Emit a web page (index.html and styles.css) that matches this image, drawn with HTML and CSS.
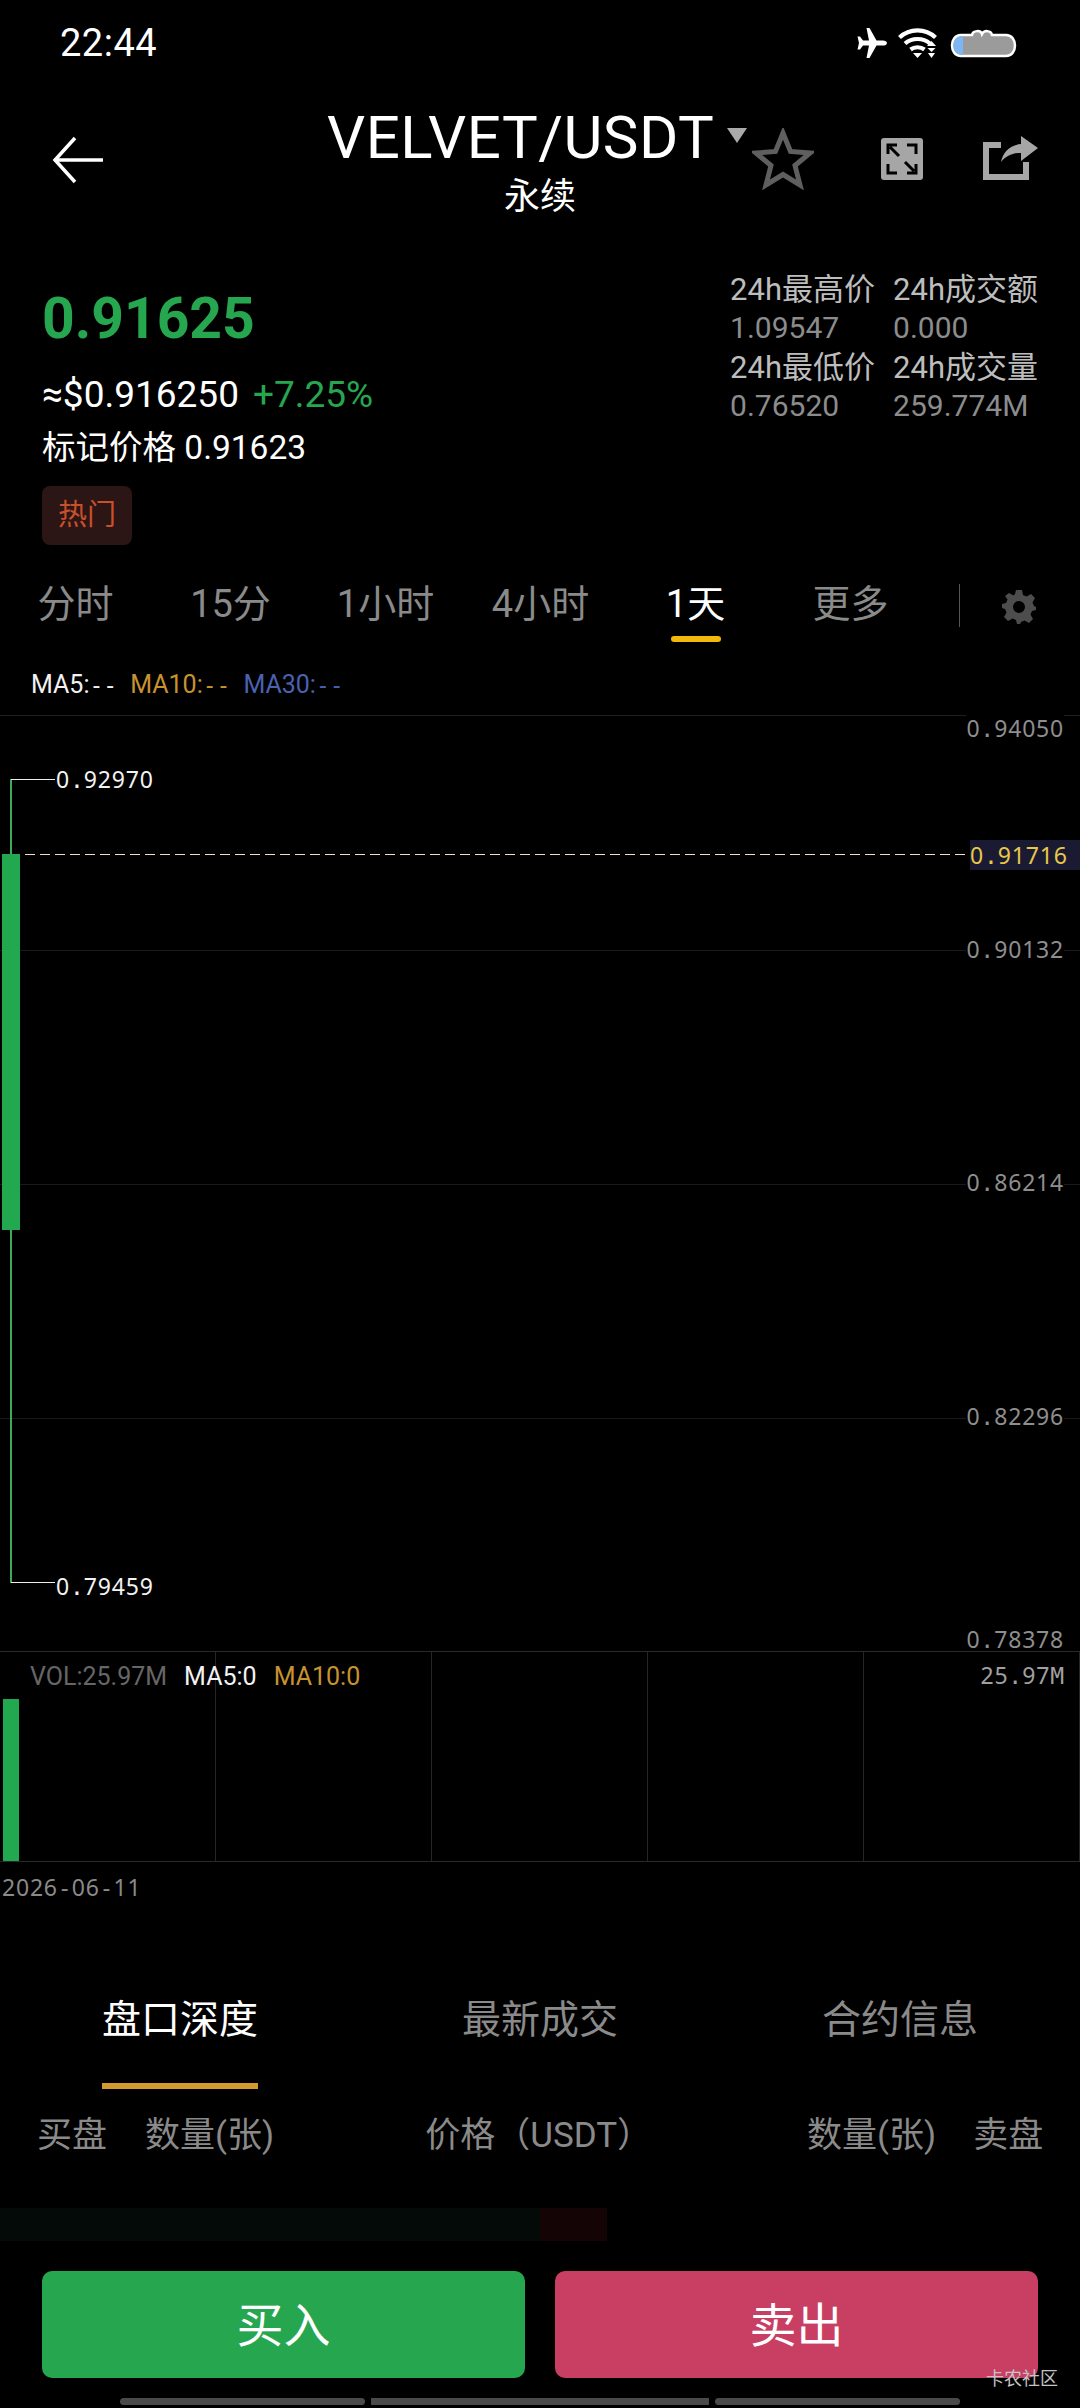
FILE: index.html
```html
<!DOCTYPE html>
<html>
<head>
    <meta charset="UTF-8">
    <title>VELVET/USDT</title>
    <link rel="stylesheet" href="styles.css">
</head>
<body>
<div class="page">
    <div class="status">
        <span class="time">22:44</span>
        <div class="status-icons">
            <svg width="30" height="30" viewBox="0 0 30 30"><path fill="#fff" d="M30 15c0-1.600-2-2.600-4-2.600h-6.500L12.500 0H9.500l2.500 12.400H6L3 8.500H.5L2 15 .5 21.500H3l3-3.900h6L9.500 30h3l7-12.400H26c2 0 4-1 4-2.600z"/></svg>
            <svg width="40" height="30" viewBox="0 0 40 30"><g fill="none" stroke="#fff" stroke-width="4.200"><path d="M1.500 9.500c10-9.500 26-9.500 36 0"/><path d="M7 15.500c7-6 18-6 25 0"/><path d="M12.500 21.500c4-3 10-3 14 0"/></g><path fill="#fff" d="M15 25h9l-4.500 5zM29 18l4.500-5 4.500 5zM29.500 20h8L33.500 24z"/><path fill="#fff" d="M30 25h7l-3.500 5z"/></svg>
            <svg class="battery" width="69" height="30" viewBox="0 0 69 30"><path fill="#9b9b9b" stroke="#fff" stroke-width="2.500" d="M12 7h11c1-5 9-5 10-1 2-4 9-4 10 1h14c12 0 12 21 0 21H12C0 28 0 7 12 7z"/><path fill="#7db6f2" d="M14 8.300H12C2 8.300 2 26.700 12 26.700h2z"/></svg>
        </div>
    </div>

    <div class="topbar">
        <svg class="back" width="52" height="48" viewBox="0 0 52 48"><path fill="none" stroke="#fff" stroke-width="3.500" d="M23 2 3 24l20 22M3 24h48"/></svg>
        <div class="title-block">
            <div class="title">VELVET/USDT<svg class="caret" width="20" height="15" viewBox="0 0 20 15"><path fill="#aaa" d="M0 0h20l-10 15z"/></svg></div>
            <div class="subtitle">永续</div>
        </div>
        <svg class="star" width="62" height="62" viewBox="0 0 62 62"><path fill="none" stroke="#5f5f5f" stroke-width="5" d="M31 5l7.500 18.500L58 25 43 37.500 48 57 31 46.500 14 57l5-19.500L4 25l19.500-1.500z"/></svg>
        <svg class="expand" width="42" height="42" viewBox="0 0 42 42"><rect width="42" height="42" rx="3" fill="#a6a6a6"/><g fill="none" stroke="#000" stroke-width="3"><path d="M7 16V7h9M26 7h9v9M7 26v9h9M35 26v9h-9M9 9l9 9M33 33l-9-9"/></g></svg>
        <svg class="share" width="56" height="44" viewBox="0 0 56 44"><path fill="none" stroke="#a6a6a6" stroke-width="6" d="M18 9H3v32h40V26"/><path fill="#a6a6a6" d="M38 0l17 12-17 13v-8c-9 0-15 3-20 9 2-10 9-17 20-18z"/></svg>
    </div>

    <div class="summary">
        <div class="quote">
            <div class="last">0.91625</div>
            <div class="approx">≈$0.916250<span class="change">+7.25%</span></div>
            <div class="mark">标记价格 0.91623</div>
            <span class="chip">热门</span>
        </div>
        <div class="stats">
            <div class="stat-name">24h最高价</div><div class="stat-name">24h成交额</div>
            <div class="stat-val">1.09547</div><div class="stat-val">0.000</div>
            <div class="stat-name">24h最低价</div><div class="stat-name">24h成交量</div>
            <div class="stat-val">0.76520</div><div class="stat-val">259.774M</div>
        </div>
    </div>

    <div class="periods">
        <span class="period">分时</span>
        <span class="period">15分</span>
        <span class="period">1小时</span>
        <span class="period">4小时</span>
        <span class="period active">1天</span>
        <span class="period">更多</span>
        <span class="period-sep"></span>
        <svg class="gear" width="34" height="34" viewBox="0 0 34 34"><path fill="#4d4d4d" fill-rule="evenodd" d="M14 0h6l1 5 3.500 1.500L29 4l4 4-2.500 4.500L32 16l2 1v3l-4 1-1.500 3.500L31 29l-4 4-4.500-2.500L19 32l-1 2h-3l-1-4-3.500-1.500L6 31l-4-4 2.500-4.500L3 19l-3-1v-4l4-1 1.500-3.500L3 6l4-3 4.500 2.500L13 4zM17 11a6 6 0 1 0 0 12 6 6 0 0 0 0-12z"/></svg>
    </div>

    <div class="legend">
        <span class="c-white">MA5:<i>--</i></span><span class="c-gold">MA10:<i>--</i></span><span class="c-blue">MA30:<i>--</i></span>
    </div>

    <div class="chart">
        <div class="grid-row"></div>
        <div class="grid-row"></div>
        <div class="grid-row"></div>
        <div class="grid-row"></div>

        <span class="mono axis tick-1">0<i>.</i>94050</span>
        <span class="mono axis tick-2">0<i>.</i>90132</span>
        <span class="mono axis tick-3">0<i>.</i>86214</span>
        <span class="mono axis tick-4">0<i>.</i>82296</span>
        <span class="mono axis tick-5">0<i>.</i>78378</span>

        <div class="dash"></div>
        <span class="mono now">0<i>.</i>91716</span>

        <div class="wick"></div>
        <div class="candle"></div>
        <div class="lead lead-high"></div>
        <span class="mono extreme high">0<i>.</i>92970</span>
        <div class="lead lead-low"></div>
        <span class="mono extreme low">0<i>.</i>79459</span>
    </div>

    <div class="volume">
        <div class="vol-cell"></div>
        <div class="vol-cell"></div>
        <div class="vol-cell"></div>
        <div class="vol-cell"></div>
        <div class="vol-cell"></div>
        <div class="vol-legend">
            <span class="c-grey">VOL:25.97M</span><span class="c-white">MA5:0</span><span class="c-gold">MA10:0</span>
        </div>
        <span class="mono axis vol-max">25<i>.</i>97<i>M</i></span>
        <div class="vol-bar"></div>
    </div>

    <div class="mono date">2026<i>-</i>06<i>-</i>11</div>

    <div class="tabs">
        <div class="tab active"><span>盘口深度</span></div>
        <div class="tab"><span>最新成交</span></div>
        <div class="tab"><span>合约信息</span></div>
    </div>

    <div class="book-head">
        <span class="bh-a">买盘</span>
        <span class="bh-b">数量(张)</span>
        <span class="bh-c">价格（USDT）</span>
        <span class="bh-d">数量(张)</span>
        <span class="bh-e">卖盘</span>
    </div>

    <div class="depth">
        <div class="depth-buy"></div>
        <div class="depth-sell"></div>
    </div>

    <div class="actions">
        <div class="btn buy">买入</div>
        <div class="btn sell">卖出</div>
    </div>

    <div class="navbar">
        <div class="nav-seg seg-a"></div>
        <div class="nav-seg seg-b"></div>
        <div class="nav-seg seg-a"></div>
    </div>

    <span class="watermark">卡农社区</span>
</div>
</body>
</html>
```

FILE: styles.css
```css
* {
    box-sizing: border-box;
}

html, body {
    margin: 0;
    background: #000;
}

body {
    font-family: Roboto, "Noto Sans CJK SC", sans-serif;
    color: #fff;
}

.page {
    position: relative;
    width: 1080px;
    height: 2408px;
    overflow: hidden;
    background: #000;
}

svg {
    display: block;
    flex: none;
}

/* status bar */
.status {
    height: 86px;
    display: flex;
    align-items: center;
    justify-content: space-between;
    padding: 0 62px 0 60px;
}

.time {
    font-size: 38px;
    letter-spacing: 0.5px;
}

.status-icons {
    display: flex;
    align-items: center;
    gap: 11px;
}

/* title bar */
.topbar {
    height: 132px;
    display: flex;
    align-items: flex-start;
}

.back {
    margin: 50px 0 0 52px;
}

.title-block {
    margin-left: 223px;
    width: 420px;
    text-align: center;
}

.title {
    display: flex;
    align-items: flex-start;
    font-size: 60px;
    line-height: 66px;
    letter-spacing: 0.5px;
    margin-top: 19px;
}

.caret {
    margin: 23px 0 0 13px;
}

.subtitle {
    font-size: 36px;
    line-height: 42px;
    margin-top: 5px;
    margin-left: 6px;
}

.star {
    margin: 42px 0 0 5px;
}

.expand {
    margin: 52px 0 0 67px;
}

.share {
    margin: 50px 0 0 60px;
}

/* price summary */
.summary {
    height: 342px;
    display: flex;
    justify-content: space-between;
    padding: 0 42px;
}

.last {
    font-size: 57px;
    line-height: 60px;
    font-weight: 700;
    color: #27a650;
    margin-top: 71px;
}

.approx {
    font-size: 37px;
    line-height: 42px;
    margin-top: 25px;
}

.change {
    color: #27a650;
    margin-left: 14px;
}

.mark {
    font-size: 33.500px;
    line-height: 42px;
    margin-top: 11px;
}

.chip {
    display: block;
    width: 90px;
    height: 59px;
    margin-top: 17px;
    border-radius: 8px;
    background: #2c1515;
    color: #c8502a;
    font-size: 29px;
    line-height: 59px;
    text-align: center;
}

.stats {
    display: grid;
    grid-template-columns: 163px auto;
    grid-auto-rows: 39px;
    margin-top: 49px;
    align-self: flex-start;
    align-items: center;
}

.stat-name {
    font-size: 31px;
    color: #bdbdbd;
    white-space: nowrap;
}

.stat-val {
    font-size: 30px;
    padding-top: 3px;
    color: #8c8c8c;
}

/* period tabs */
.periods {
    height: 100px;
    display: flex;
    align-items: flex-start;
    margin-left: -2px;
}

.period {
    position: relative;
    width: 155px;
    text-align: center;
    font-size: 38px;
    line-height: 58px;
    margin-top: 15px;
    color: #8a8a8a;
}

.period.active {
    color: #fff;
}

.period.active::after {
    content: "";
    position: absolute;
    left: 53px;
    bottom: -9px;
    width: 50px;
    height: 6px;
    border-radius: 3px;
    background: #f0b90b;
}

.period-sep {
    width: 1px;
    height: 43px;
    margin: 24px 0 0 31px;
    background: #555;
}

.gear {
    margin: 30px 0 0 42px;
}

.legend {
    height: 55px;
    display: flex;
    gap: 13px;
    padding-left: 31px;
    font-size: 25px;
    line-height: 50px;
}

.legend i {
    font-family: "DejaVu Sans Mono", monospace;
    font-size: 23px;
    font-style: normal;
    letter-spacing: 0;
}

.c-white { color: #f2f2f2; }
.c-gold { color: #c8922f; }
.c-blue { color: #4a62b0; }
.c-grey { color: #666; }

/* candle chart */
.chart {
    position: relative;
    height: 936px;
    border-top: 1px solid #1f1f1f;
}

.grid-row {
    height: 234px;
}

.grid-row + .grid-row {
    border-top: 1px solid #1a1a1a;
}

.mono {
    font-family: "Noto Sans", sans-serif;
    font-size: 23px;
    line-height: 28px;
    letter-spacing: 0.8px;
    white-space: nowrap;
}

.mono i {
    font-family: "DejaVu Sans Mono", monospace;
    font-style: normal;
    letter-spacing: 0;
}

.axis {
    position: absolute;
    right: 16px;
    color: #8e8e8e;
    background: #000;
}

.tick-1 { top: -2px; }
.tick-2 { top: 219px; }
.tick-3 { top: 452px; }
.tick-4 { top: 686px; }
.tick-5 { top: 909px; background: none; }

.dash {
    position: absolute;
    top: 138px;
    left: 25px;
    width: 941px;
    height: 1px;
    background: repeating-linear-gradient(to right, #f0e0c8 0 10px, transparent 10px 15px);
}

.now {
    position: absolute;
    top: 124px;
    right: 0;
    width: 110px;
    height: 30px;
    line-height: 30px;
    background: #1b1a33;
    color: #e8c84a;
}

.wick {
    position: absolute;
    top: 63px;
    left: 10px;
    width: 2px;
    height: 804px;
    background: #3ea85f;
}

.candle {
    position: absolute;
    top: 138px;
    left: 2px;
    width: 18px;
    height: 376px;
    background: #22a84f;
}

.lead {
    position: absolute;
    left: 11px;
    width: 44px;
    height: 1px;
    background: #eee;
}

.lead-high { top: 63px; }
.lead-low { top: 866px; }

.extreme {
    position: absolute;
    left: 56px;
    color: #f2f2f2;
}

.high { top: 49px; }
.low { top: 856px; }

/* volume panel */
.volume {
    position: relative;
    height: 211px;
    display: grid;
    grid-template-columns: repeat(5, 1fr);
    border-top: 1px solid #2a2a2a;
    border-bottom: 1px solid #2a2a2a;
}

.vol-cell {
    border-right: 1px solid #262626;
}

.vol-legend {
    position: absolute;
    top: 8px;
    left: 30px;
    display: flex;
    gap: 17px;
    font-size: 25px;
    line-height: 34px;
}

.vol-max {
    top: 9px;
    color: #a0a0a0;
    background: none;
}

.vol-bar {
    position: absolute;
    left: 3px;
    bottom: 0;
    width: 16px;
    height: 162px;
    background: #22a84f;
}

.date {
    height: 50px;
    line-height: 50px;
    padding-left: 2px;
    color: #8a8a8a;
}

/* order book tabs */
.tabs {
    display: grid;
    grid-template-columns: repeat(3, 1fr);
    height: 196px;
    padding-top: 80px;
}

.tab {
    text-align: center;
    font-size: 39px;
    line-height: 56px;
    color: #8a8a8a;
}

.tab span {
    display: inline-block;
    height: 97px;
    border-bottom: 6px solid transparent;
}

.tab.active {
    color: #fff;
}

.tab.active span {
    border-bottom-color: #d39a2f;
}

.book-head {
    height: 100px;
    display: flex;
    align-items: flex-start;
    font-size: 35px;
    line-height: 50px;
    color: #8a8a8a;
    padding: 3px 37px 0;
    white-space: nowrap;
}

.bh-b { margin-left: 38px; }
.bh-c { margin-left: 151px; }
.bh-d { margin-left: 155px; }
.bh-e { margin-left: 37px; }

.depth {
    height: 33px;
    display: flex;
}

.depth-buy {
    width: 540px;
    background: #030a08;
}

.depth-sell {
    width: 67px;
    background: #140406;
}

.actions {
    display: flex;
    gap: 30px;
    padding: 30px 42px 0;
}

.btn {
    flex: 1;
    height: 107px;
    padding-top: 3px;
    border-radius: 10px;
    text-align: center;
    font-size: 47px;
    line-height: 104px;
}

.buy { background: #27a650; }
.sell { background: #c93f63; }

.navbar {
    display: flex;
    justify-content: center;
    gap: 6px;
    margin-top: 20px;
}

.nav-seg {
    height: 7px;
    background: #4a4a4a;
}

.seg-a { width: 245px; border-radius: 4px; }
.seg-b { width: 338px; }

.watermark {
    position: absolute;
    left: 986px;
    top: 2367px;
    font-size: 18px;
    line-height: 24px;
    color: #c4c4c4;
}
```
